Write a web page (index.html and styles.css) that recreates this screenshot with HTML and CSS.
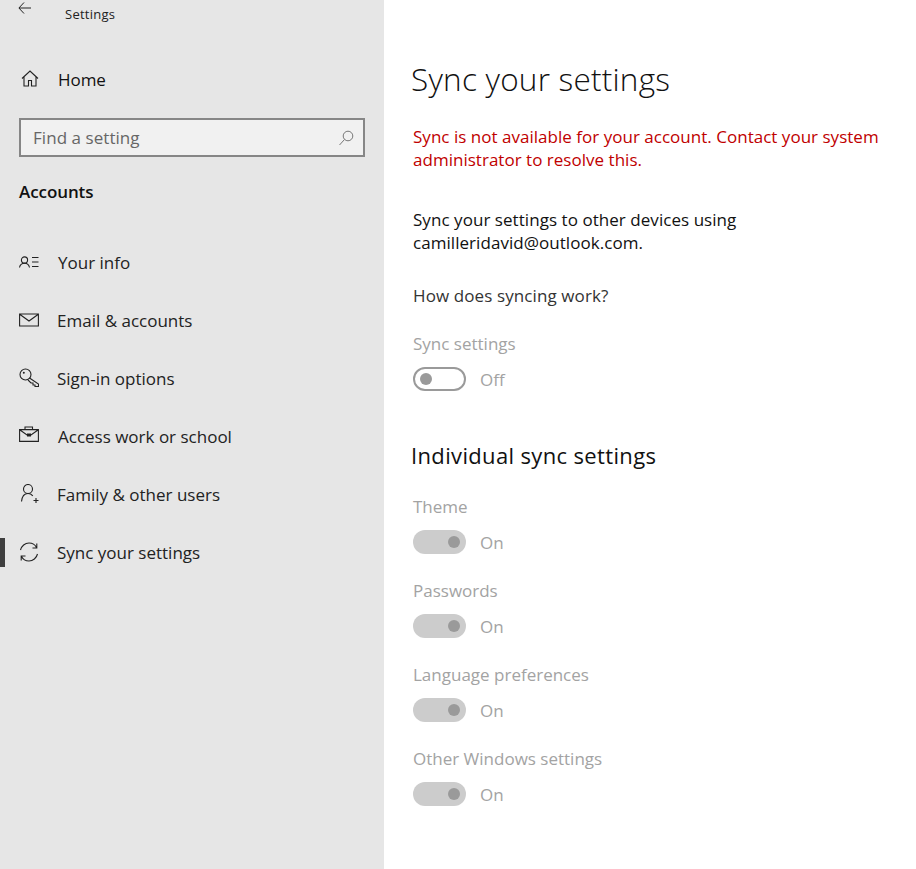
FILE: index.html
```html
<!DOCTYPE html>
<html lang="en">
<head>
<meta charset="utf-8">
<title>Settings</title>
<link rel="stylesheet" href="styles.css">
</head>
<body>
<div class="app">
  <aside class="sidebar">
    <div class="titlebar">
      <svg class="back" width="14" height="12" viewBox="0 0 14 12"><path d="M6 .5.9 6 6 11.500M1 6h12" fill="none" stroke="#222" stroke-width="1"/></svg>
      <span class="apptitle">Settings</span>
    </div>
    <div class="home">
      <svg class="ico" width="20" height="20" viewBox="0 0 20 20"><path d="M2 9.500 10 2l8 7.500M4 8v9h4.500v-5.500h3V17H16V8" fill="none" stroke="#222" stroke-width="1.100"/></svg>
      <span>Home</span>
    </div>
    <div class="search">
      <span class="placeholder">Find a setting</span>
      <svg width="16" height="16" viewBox="0 0 16 16"><circle cx="10" cy="6" r="4.800" fill="none" stroke="#777" stroke-width="1"/><path d="M6.500 9.500 1.500 15" fill="none" stroke="#777" stroke-width="1"/></svg>
    </div>
    <h2 class="section">Accounts</h2>
    <nav class="nav">
      <div class="item">
        <svg class="ico" width="20" height="20" viewBox="0 0 20 20"><circle cx="5.500" cy="8" r="3.100" fill="none" stroke="#222" stroke-width="1.100"/><path d="M0.500 15.500C1 12.500 3 11.200 5.500 11.200s4.500 1.300 5 4.300M13 5.500H19.500M13 10H19.500M13 14.500H19.500" fill="none" stroke="#222" stroke-width="1.100"/></svg>
        <span>Your info</span>
      </div>
      <div class="item tight">
        <svg class="ico" width="20" height="20" viewBox="0 0 20 20"><path d="M.6 4h18.800v12H.6zM1 4.500l9 6.500 9-6.500" fill="none" stroke="#222" stroke-width="1.100"/></svg>
        <span>Email &amp; accounts</span>
      </div>
      <div class="item tight">
        <svg class="ico" width="20" height="20" viewBox="0 0 20 20"><circle cx="6.500" cy="6.500" r="5.500" fill="none" stroke="#222" stroke-width="1.100"/><circle cx="4.800" cy="4.800" r="1" fill="#222"/><path d="M10.500 10 19.500 16v2.500H16V17h-2v-2h-2l-3-3" fill="none" stroke="#222" stroke-width="1.100"/></svg>
        <span>Sign-in options</span>
      </div>
      <div class="item">
        <svg class="ico" width="20" height="20" viewBox="0 0 20 20"><path d="M.6 3.600h18.800v11.800H.6zM6 3.500V1h7.500v2.500M1 4l7 5h4l7-5" fill="none" stroke="#222" stroke-width="1.100"/><rect x="8" y="7.500" width="4" height="3" fill="#222"/></svg>
        <span>Access work or school</span>
      </div>
      <div class="item tight">
        <svg class="ico" width="20" height="20" viewBox="0 0 20 20"><circle cx="9" cy="5" r="4.500" fill="none" stroke="#222" stroke-width="1.100"/><path d="M2.500 17.500c.5-5 3-8 6.500-8 2 0 3.500.8 4.800 2.300M17 14v5M14.500 16.500h5" fill="none" stroke="#222" stroke-width="1.100"/></svg>
        <span>Family &amp; other users</span>
      </div>
      <div class="item tight active">
        <svg class="ico" width="20" height="20" viewBox="0 0 20 20"><path d="M1.500 8C2.500 4 6 1 10 1c3 0 6 1.500 7.500 4.500M17.800 1.500V6h-4.300M18.500 12c-1 4-4.500 7-8.500 7-3 0-6-1.500-7.500-4.500M2.200 18.500V14h4.300" fill="none" stroke="#222" stroke-width="1.100"/></svg>
        <span>Sync your settings</span>
      </div>
    </nav>
  </aside>
  <main class="main">
    <h1 class="title">Sync your settings</h1>
    <p class="error">Sync is not available for your account. Contact your system administrator to resolve this.</p>
    <p class="desc">Sync your settings to other devices using<br>camilleridavid@outlook.com.</p>
    <p class="link">How does syncing work?</p>
    <div class="setting first">
      <div class="label">Sync settings</div>
      <div class="control"><span class="toggle off"><i class="knob"></i></span><span class="state">Off</span></div>
    </div>
    <h2 class="subtitle">Individual sync settings</h2>
    <div class="setting">
      <div class="label">Theme</div>
      <div class="control"><span class="toggle on"><i class="knob"></i></span><span class="state">On</span></div>
    </div>
    <div class="setting">
      <div class="label">Passwords</div>
      <div class="control"><span class="toggle on"><i class="knob"></i></span><span class="state">On</span></div>
    </div>
    <div class="setting">
      <div class="label">Language preferences</div>
      <div class="control"><span class="toggle on"><i class="knob"></i></span><span class="state">On</span></div>
    </div>
    <div class="setting">
      <div class="label">Other Windows settings</div>
      <div class="control"><span class="toggle on"><i class="knob"></i></span><span class="state">On</span></div>
    </div>
  </main>
</div>
</body>
</html>
```
FILE: styles.css
```css
* { box-sizing: border-box; }
html, body { margin: 0; height: 100%; background: #fff; overflow: hidden; }
body { font-family: "Open Sans", "Noto Sans", sans-serif; color: #111; }
.app { display: flex; height: 869px; }
.sidebar { width: 384px; flex: none; background: #e6e6e6; display: flex; flex-direction: column; }
.titlebar { height: 30px; padding-left: 18px; display: flex; align-items: flex-start; }
.back { margin-top: 2px; }
.apptitle { margin-left: 33px; margin-top: 6px; font-size: 13px; line-height: 17px; letter-spacing: .25px; color: #222; }
.home { margin-top: 35px; padding-left: 20px; height: 28px; display: flex; align-items: center; font-size: 17px; letter-spacing: -.05px; color: #111; }
.home span { margin-left: 18px; }
.search { margin: 25px 19px 0; height: 39px; border: 2px solid #868686; background: #f1f1f1; display: flex; align-items: center; justify-content: space-between; padding: 0 9px 0 12px; }
.placeholder { font-size: 17px; letter-spacing: .05px; color: #666; }
.section { margin: 22px 0 0 19px; font-size: 17px; line-height: 26px; font-weight: 600; letter-spacing: -.08px; color: #111; }
.nav { margin-top: 28px; display: flex; flex-direction: column; }
.item { height: 58px; padding-left: 19px; display: flex; align-items: center; font-size: 17px; color: #222; position: relative; }
.item span { margin-left: 19px; }
.item.tight span { margin-left: 18px; }
.active::before { content: ""; position: absolute; left: 0; top: 15px; width: 5px; height: 29px; background: #3f3f3f; }
.main { flex: 1; padding: 58px 0 0 29px; min-width: 0; }
.title { margin: 0 0 0 -2px; font-size: 31.5px; line-height: 42px; font-weight: 300; letter-spacing: .22px; color: #111; }
.error { margin: 25px 0 0; width: 490px; font-size: 17px; line-height: 23px; letter-spacing: .02px; color: #c00000; }
.desc { margin: 37px 0 0; font-size: 17px; line-height: 23px; letter-spacing: .05px; color: #111; }
.link { margin: 30px 0 0; font-size: 17px; line-height: 23px; letter-spacing: .1px; color: #333; }
.setting { margin-top: 25px; }
.label { font-size: 17px; line-height: 23px; color: #a3a3a3; }
.control { margin-top: 12px; display: flex; align-items: center; height: 24px; }
.toggle { width: 53px; height: 24px; border-radius: 12px; display: flex; align-items: center; padding: 0 6px; }
.toggle.off { border: 2px solid #9a9a9a; padding: 0 5px; }
.toggle.on { background: #cccccc; justify-content: flex-end; }
.knob { width: 12px; height: 12px; border-radius: 50%; background: #9a9a9a; display: block; }
.state { margin-left: 14px; font-size: 17px; color: #a3a3a3; }
.subtitle { margin: 49px 0 0 -2px; font-size: 22px; line-height: 31px; font-weight: 400; letter-spacing: .35px; color: #111; }
.subtitle + .setting { margin-top: 24px; }
```
